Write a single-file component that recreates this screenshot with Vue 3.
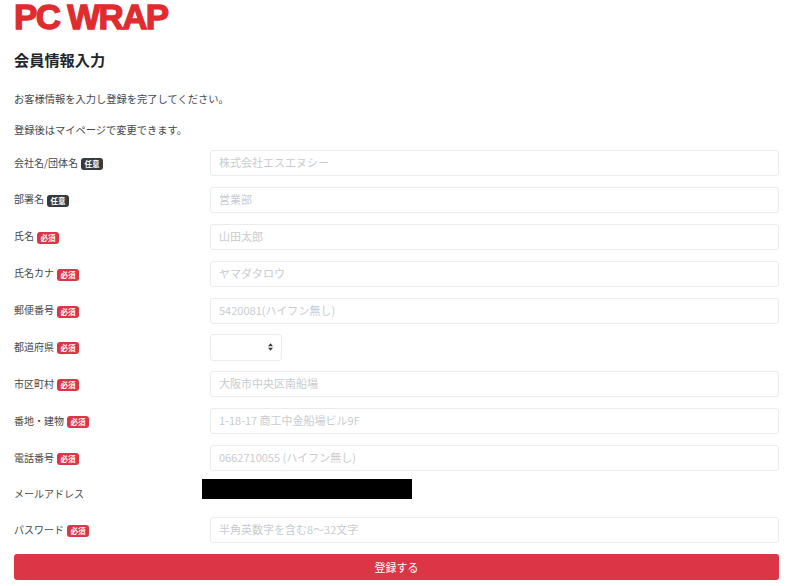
<script setup>
const fields = [
  { label: '会社名/団体名', badge: '任意', ph: '株式会社エスエヌシー' },
  { label: '部署名', badge: '任意', ph: '営業部' },
  { label: '氏名', badge: '必須', ph: '山田太郎' },
  { label: '氏名カナ', badge: '必須', ph: 'ヤマダタロウ' },
  { label: '郵便番号', badge: '必須', ph: '5420081(ハイフン無し)' },
  { label: '都道府県', badge: '必須', select: true },
  { label: '市区町村', badge: '必須', ph: '大阪市中央区南船場' },
  { label: '番地・建物', badge: '必須', ph: '1-18-17 商工中金船場ビル9F' },
  { label: '電話番号', badge: '必須', ph: '0662710055 (ハイフン無し)' },
  { label: 'メールアドレス', mail: true },
  { label: 'パスワード', badge: '必須', ph: '半角英数字を含む8〜32文字' },
]
</script>

<template>
  <main class="page">
    <div class="logo">PC WRAP</div>
    <h1 class="title">会員情報入力</h1>
    <p class="lead first">お客様情報を入力し登録を完了してください。</p>
    <p class="lead second">登録後はマイページで変更できます。</p>
    <form class="form" @submit.prevent>
      <div v-for="f in fields" :key="f.label" class="row" :class="{ 'mail-row': f.mail }">
        <label class="label">
          {{ f.label }}
          <span v-if="f.badge" class="badge" :class="f.badge === '必須' ? 'req' : 'opt'">{{ f.badge }}</span>
        </label>
        <div v-if="f.select" class="select">
          <svg class="arrows" width="5" height="8" viewBox="0 0 6 9"><path d="M3 0 6 3.5H0zM3 9 0 5.5H6z" fill="#343a40" /></svg>
        </div>
        <div v-else-if="f.mail" class="mail"></div>
        <input v-else class="input" type="text" :placeholder="f.ph" />
      </div>
      <button class="submit" type="submit">登録する</button>
    </form>
  </main>
</template>

<style scoped>
.page {
  box-sizing: border-box;
  width: 800px;
  height: 586px;
  padding: 1px 21px 0 14px;
  overflow: hidden;
  background: #fff;
  color: #43484d;
  font-family: "Noto Sans CJK JP", "Noto Sans", sans-serif;
  font-size: 10px;
}
.logo {
  height: 32px;
  width: 160px;
  font-family: "Liberation Sans", sans-serif;
  font-weight: 700;
  font-size: 35px;
  line-height: 31px;
  letter-spacing: -1.7px;
  color: #e02b2f;
  -webkit-text-stroke: 1.3px #e02b2f;
  white-space: nowrap;
}
.title {
  margin: 15px 0 0;
  height: 22px;
  font-size: 15.2px;
  line-height: 22px;
  font-weight: 700;
  color: #212529;
}
.lead {
  margin: 0;
  height: 15px;
  font-size: 10.25px;
  line-height: 15px;
}
.first { margin-top: 21px; }
.second { margin-top: 16px; }
.form {
  display: flex;
  flex-direction: column;
  gap: 10.9px;
  margin-top: 13px;
}
.row {
  display: flex;
  align-items: center;
  height: 26px;
}
.mail-row { height: 24.5px; }
.label {
  width: 196px;
  flex: none;
  display: flex;
  align-items: center;
  gap: 3px;
  margin-bottom: 2px;
  white-space: nowrap;
}
.badge {
  box-sizing: border-box;
  display: inline-block;
  width: 22px;
  height: 12px;
  margin-top: 4px;
  border-radius: 3px;
  color: #fff;
  font-size: 7.5px;
  line-height: 12px;
  font-weight: 700;
  text-align: center;
}
.req { background: #dc3545; }
.opt { background: #343a40; }
.input {
  box-sizing: border-box;
  flex: 1;
  min-width: 0;
  height: 26px;
  padding: 0 8px 2px;
  border: 1px solid #e9ebed;
  border-radius: 3px;
  background: #fff;
  font-family: inherit;
  font-size: 11px;
  outline: none;
}
.input::placeholder {
  color: #c8ccd0;
  opacity: 1;
}
.select {
  box-sizing: border-box;
  width: 72px;
  height: 27px;
  display: flex;
  align-items: center;
  justify-content: flex-end;
  padding-right: 8px;
  border: 1px solid #e9ebed;
  border-radius: 3px;
}
.mail {
  width: 210px;
  height: 20px;
  margin: -10px 0 0 -8px;
  background: #000;
}
.submit {
  height: 25.5px;
  border: 0;
  border-radius: 3px;
  background: #dc3545;
  color: #fff;
  font-family: inherit;
  font-size: 11px;
  padding: 0 0 1px;
}
</style>
